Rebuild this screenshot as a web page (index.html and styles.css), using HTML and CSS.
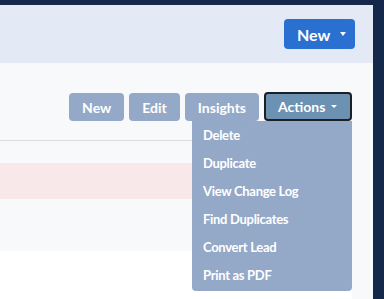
FILE: index.html
```html
<!DOCTYPE html>
<html>
<head>
<meta charset="utf-8">
<link rel="stylesheet" href="styles.css">
</head>
<body>
<div class="frame">
  <header class="topbar">
    <button class="btn-primary">New <span class="caret caret-lg"></span></button>
  </header>
  <main class="main">
    <div class="toolbar">
      <button class="btn">New</button>
      <button class="btn">Edit</button>
      <button class="btn">Insights</button>
      <div class="dropdown">
        <button class="btn btn-active">Actions <span class="caret"></span></button>
        <ul class="menu">
          <li>Delete</li>
          <li>Duplicate</li>
          <li>View Change Log</li>
          <li>Find Duplicates</li>
          <li>Convert Lead</li>
          <li>Print as PDF</li>
        </ul>
      </div>
    </div>
    <div class="list">
      <div class="row row-a"></div>
      <div class="row row-pink"></div>
      <div class="row row-b"></div>
      <div class="row row-white"></div>
    </div>
  </main>
</div>
</body>
</html>
```
FILE: styles.css
```css
* { box-sizing: border-box; }
html, body { margin: 0; padding: 0; }
body {
  background: #13284a;
  font-family: Lato, "Open Sans", sans-serif;
  height: 299px;
  overflow: hidden;
}
.frame {
  margin-top: 5px;
  margin-right: 11px;
  height: 294px;
  display: flex;
  flex-direction: column;
}
.topbar {
  height: 58px;
  background: #e3e9f5;
  display: flex;
  align-items: center;
  justify-content: flex-end;
  padding-right: 18px;
}
.btn-primary {
  height: 30px;
  width: 71px;
  border: none;
  border-radius: 4px;
  background: #2a70d0;
  color: #fff;
  font-family: inherit;
  font-weight: 700;
  font-size: 16px;
  display: flex;
  align-items: center;
  padding: 0 0 0 13px;
  gap: 10px;
}
.caret {
  display: inline-block;
  width: 0;
  height: 0;
  border-left: 3px solid transparent;
  border-right: 3px solid transparent;
  border-top: 3px solid #fff;
}
.caret-lg { border-left-width: 3px; border-right-width: 3px; border-top-width: 4px; margin-top: -1px; }
.main {
  flex: 1;
  background: #f8f9fb;
  padding-right: 21px;
  display: flex;
  flex-direction: column;
}
.toolbar {
  display: flex;
  justify-content: flex-end;
  gap: 5px;
  padding-top: 30px;
}
.btn {
  height: 28px;
  border: none;
  border-radius: 4px;
  background: #94a9c8;
  color: #fff;
  font-family: inherit;
  font-weight: 700;
  font-size: 14px;
  padding: 0 13px;
  display: flex;
  align-items: center;
  gap: 6px;
}
.dropdown { position: relative; }
.btn-active {
  width: 88px;
  background: #6b91b3;
  border: 2px solid #1c1f24;
  padding: 0 0 0 12px;
  height: 29px;
  margin-top: -1px;
}
.menu {
  position: absolute;
  top: 28px;
  right: 0;
  width: 160px;
  margin: 0;
  padding: 0 0 2px;
  list-style: none;
  background: #94a9c8;
  border-radius: 0 0 4px 4px;
  z-index: 2;
}
.menu li {
  height: 28px;
  line-height: 28px;
  padding-left: 11px;
  color: #fff;
  font-weight: 700;
  font-size: 13px;
  letter-spacing: -0.3px;
}
.list {
  margin-top: 19px;
  border-top: 1px solid #dcdde2;
  flex: 1;
  display: flex;
  flex-direction: column;
}
.row-a { height: 22px; background: #f8f9fb; }
.row-pink { height: 36px; background: #f8e8ea; }
.row-b { height: 52px; background: #f8f9fb; }
.row-white { flex: 1; background: #fff; }
```
